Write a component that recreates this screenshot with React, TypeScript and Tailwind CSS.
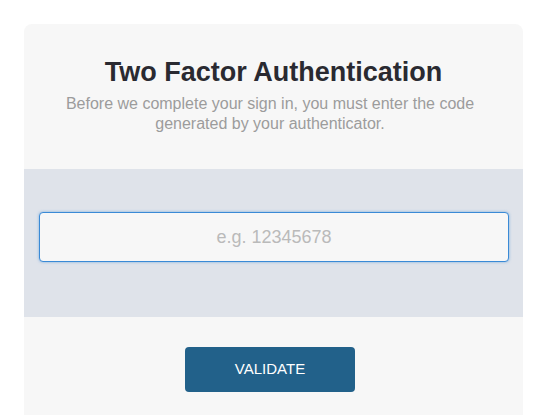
export default function App() {
  return (
    <div
      className="min-h-[415px] bg-white px-6 pt-6"
      style={{ fontFamily: '"Liberation Sans", Arial, sans-serif' }}
    >
      <div className="w-[499px] rounded-t-lg bg-[#f7f7f7] h-[400px] overflow-hidden">
        <div className="px-6 pt-[32px] pb-[35px] text-center">
          <h1 className="text-[27px] leading-8 font-bold text-[#2a2a31]">
            Two Factor Authentication
          </h1>
          <p className="mt-[6px] pr-[7px] text-[16px] leading-5 text-[#9c9c9c]">
            Before we complete your sign in, you must enter the code
            <br />
            generated by your authenticator.
          </p>
        </div>

        <div className="bg-[#dfe3ea] pl-[15px] pr-[14px] pt-[43px] pb-[55px]">
          <input
            type="text"
            placeholder="e.g. 12345678"
            className="block w-[470px] h-[50px] rounded-[4px] border border-[#3a8ad6] bg-[#f7f7f7] text-center text-[18px] text-[#333] placeholder:text-[#bababa] shadow-[0_0_3px_rgba(58,138,214,0.6)] outline-none"
          />
        </div>

        <div className="pt-[30px] pl-[161px]">
          <button className="w-[170px] h-[45px] rounded-[4px] bg-[#22618a] text-[15px] text-white">
            VALIDATE
          </button>
        </div>
      </div>
    </div>
  );
}
